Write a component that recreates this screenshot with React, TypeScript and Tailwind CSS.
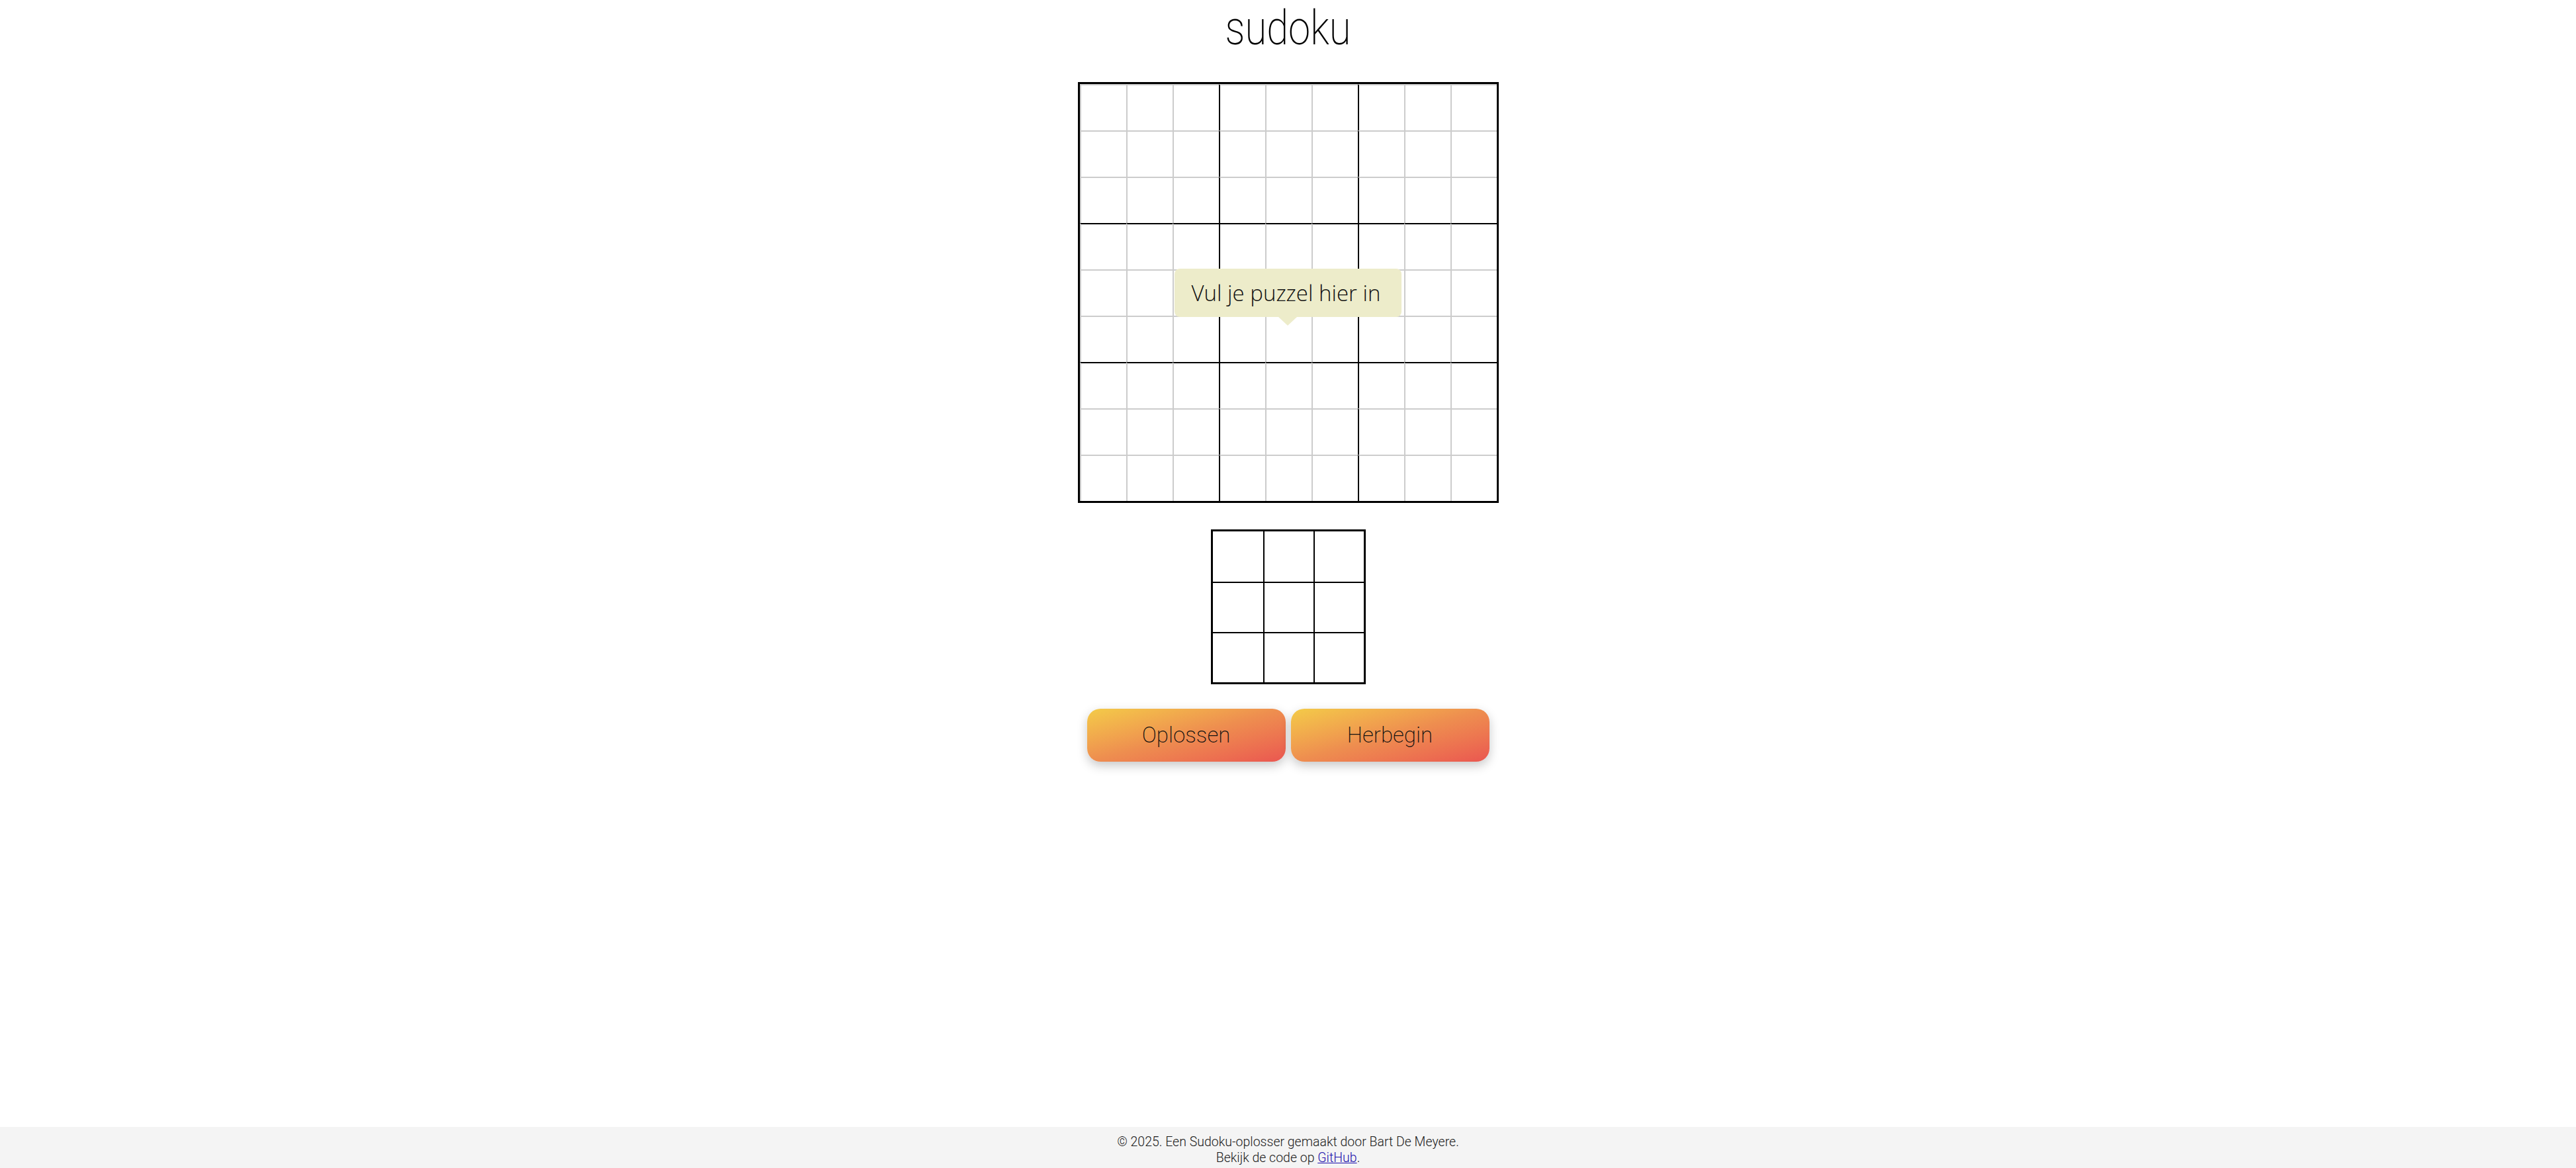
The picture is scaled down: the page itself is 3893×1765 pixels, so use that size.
const ROWS = Array.from({ length: 9 }, (_, i) => i);
const SMALL = Array.from({ length: 3 }, (_, i) => i);

function BigGrid() {
  return (
    <div className="relative">
      <div className="grid grid-cols-9 border-[3px] border-black">
        {ROWS.map((r) =>
          ROWS.map((c) => {
            const left = c === 0 ? "border-l-2 border-l-[#cccccc]" : c % 3 === 0 ? "border-l-2 border-l-black" : "border-l-2 border-l-[#cccccc]";
            const top = r === 0 ? "border-t-2 border-t-[#cccccc]" : r % 3 === 0 ? "border-t-2 border-t-black" : "border-t-2 border-t-[#cccccc]";
            return (
              <div
                key={`${r}-${c}`}
                className={`w-[70px] h-[70px] bg-white ${left} ${top}`}
              />
            );
          })
        )}
      </div>
      <div className="absolute top-[282px] left-1/2 -translate-x-1/2 flex flex-col items-center">
        <div className="h-[73px] flex items-center pl-[26px] pr-[32px] rounded-[8px] bg-[#edecca] text-[33px] font-light text-[#111] whitespace-nowrap [font-family:'Open_Sans',sans-serif]">
          Vul je puzzel hier in
        </div>
        <div className="w-0 h-0 border-l-[14px] border-r-[14px] border-t-[13px] border-l-transparent border-r-transparent border-t-[#edecca]" />
      </div>
    </div>
  );
}

function SmallGrid() {
  return (
    <div className="grid grid-cols-3 border-[3px] border-black">
      {SMALL.map((r) =>
        SMALL.map((c) => (
          <div
            key={`${r}-${c}`}
            className={`w-[76px] h-[76px] bg-white ${c > 0 ? "border-l-2 border-l-black" : ""} ${r > 0 ? "border-t-2 border-t-black" : ""}`}
          />
        ))
      )}
    </div>
  );
}

function GradientButton({ label }: { label: string }) {
  return (
    <button className="w-[300px] h-[80px] rounded-[20px] bg-linear-to-br from-[#f3cb48] via-[#ee8e4f] to-[#ea5650] text-[33px] font-extralight text-[#111] shadow-[0_6px_16px_rgba(0,0,0,0.22)]">
      {label}
    </button>
  );
}

export default function App() {
  return (
    <div className="min-h-screen flex flex-col bg-white [font-family:Roboto,'Open_Sans',sans-serif]">
      <main className="flex-1 flex flex-col items-center">
        <h1 className="mt-[1px] text-[72px] leading-[84px] font-extralight text-black scale-x-[0.83]">sudoku</h1>
        <div className="mt-[39px]">
          <BigGrid />
        </div>
        <div className="mt-[40px]">
          <SmallGrid />
        </div>
        <div className="mt-[37px] flex gap-[8px]">
          <GradientButton label="Oplossen" />
          <GradientButton label="Herbegin" />
        </div>
      </main>
      <footer className="h-[62px] pt-[11px] pb-[3px] bg-[#f4f4f4] text-center text-[19.5px] leading-[24px] font-light text-[#1a1a1a]">
        <p>© 2025. Een Sudoku-oplosser gemaakt door Bart De Meyere.</p>
        <p>
          Bekijk de code op{" "}
          <a href="#" className="text-[#1a0dab] underline">
            GitHub
          </a>
          .
        </p>
      </footer>
    </div>
  );
}
